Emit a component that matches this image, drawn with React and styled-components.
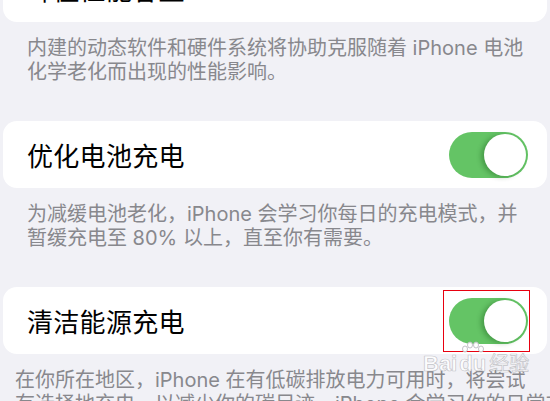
import styled, { createGlobalStyle } from "styled-components";

const GlobalStyle = createGlobalStyle`
  body {
    margin: 0;
    background: #f1f1f6;
    font-family: "Inter", "Noto Sans CJK SC", sans-serif;
    overflow: hidden;
  }
`;

const Screen = styled.div`
  position: relative;
  width: 550px;
  height: 401px;
  overflow: hidden;
  background: #f1f1f6;
`;

const Page = styled.div`
  display: flex;
  flex-direction: column;
  margin-top: -45px;
  padding: 0 3px;
`;

const Card = styled.div`
  height: 67px;
  background: #fff;
  border-radius: 14px;
  display: flex;
  align-items: center;
  justify-content: space-between;
  padding: 0 19px 0 24px;
`;

const Title = styled.span`
  font-size: 26px;
  color: #000;
  letter-spacing: 0.3px;
`;

const Footer = styled.p`
  margin: 0;
  padding: 14px 0 37px ${(p) => p.$inset}px;
  font-size: 20px;
  line-height: 24px;
  color: #88888d;
  white-space: nowrap;
`;

const Switch = styled.div`
  position: relative;
  width: 79px;
  height: 46px;
  border-radius: 23px;
  background: #64c465;
  display: flex;
  align-items: center;
  justify-content: flex-end;
  padding: 2px;
  box-sizing: border-box;

  ${(p) =>
    p.$marked &&
    `
    &::after {
      content: "";
      position: absolute;
      left: -6px;
      right: -2px;
      top: -8px;
      bottom: -8px;
      border: 1px solid #e8000f;
    }
  `}
`;

const Knob = styled.div`
  width: 42px;
  height: 42px;
  border-radius: 50%;
  background: #fff;
  box-shadow: -3px 1px 5px rgba(0, 60, 0, 0.3);
`;

const Watermark = styled.div`
  position: absolute;
  left: 423px;
  top: 341px;
  display: flex;
  align-items: flex-end;
  font-family: "Liberation Sans", "Noto Sans CJK SC", sans-serif;
  font-weight: 700;
  color: rgba(255, 255, 255, 0.85);
  -webkit-text-stroke: 0.7px rgba(185, 185, 190, 0.85);
  pointer-events: none;
`;

const Paw = styled.div`
  display: flex;
  flex-direction: column;
  align-items: center;
  margin: 0 3px 0 2px;
`;

const Word = styled.span`
  line-height: 22px;
  margin-bottom: 5px;
  font-size: ${(p) => p.$size || 22}px;
  font-weight: ${(p) => p.$weight || 700};
`;

const PawIcon = () => (
  <svg width="24" height="12" viewBox="0 0 24 12">
    <g fill="rgba(255,255,255,0.9)" stroke="rgba(185,185,190,0.85)" strokeWidth="1">
      <ellipse cx="4" cy="8" rx="2.5" ry="3" />
      <ellipse cx="9" cy="4" rx="2.5" ry="3" />
      <ellipse cx="15" cy="4" rx="2.5" ry="3" />
      <ellipse cx="20" cy="8" rx="2.5" ry="3" />
    </g>
  </svg>
);

const Toggle = ({ marked }) => (
  <Switch $marked={marked}>
    <Knob />
  </Switch>
);

export default function App() {
  return (
    <Screen>
      <GlobalStyle />
      <Page>
        <Card>
          <Title>峰值性能容量</Title>
        </Card>
        <Footer $inset={24}>
          内建的动态软件和硬件系统将协助克服随着 iPhone 电池
          <br />
          化学老化而出现的性能影响。
        </Footer>

        <Card>
          <Title>优化电池充电</Title>
          <Toggle />
        </Card>
        <Footer $inset={24}>
          为减缓电池老化，iPhone 会学习你每日的充电模式，并
          <br />
          暂缓充电至 80% 以上，直至你有需要。
        </Footer>

        <Card>
          <Title>清洁能源充电</Title>
          <Toggle marked />
        </Card>
        <Footer $inset={12}>
          在你所在地区，iPhone 在有低碳排放电力可用时，将尝试
          <br />
          有选择地充电，以减少你的碳足迹。iPhone 会学习你的日常充电模式
        </Footer>
      </Page>

      <Watermark>
        <Word>Bai</Word>
        <Paw>
          <PawIcon />
          <Word>du</Word>
        </Paw>
        <Word $size={20} $weight={400}>经验</Word>
      </Watermark>
    </Screen>
  );
}
